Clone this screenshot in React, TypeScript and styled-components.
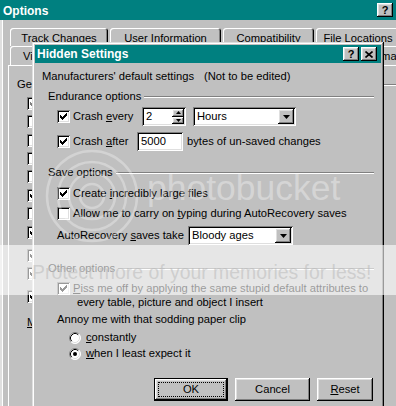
import React from 'react';
import styled, { createGlobalStyle } from 'styled-components';

const GlobalStyle = createGlobalStyle`
  * { box-sizing: border-box; }
  html, body { margin: 0; padding: 0; background: #c0c0c0; }
  body {
    font-family: "Liberation Sans", Arial, sans-serif;
    font-size: 11.2px;
    line-height: 13px;
    color: #000;
  }
`;

const raised = `box-shadow: inset -1px -1px #000, inset 1px 1px #fff, inset -2px -2px #808080, inset 2px 2px #dfdfdf;`;
const sunken = `box-shadow: inset 1px 1px #808080, inset -1px -1px #fff, inset 2px 2px #000, inset -2px -2px #dfdfdf;`;

const Screen = styled.div`
  position: relative;
  width: 396px;
  height: 406px;
  overflow: hidden;
  background: #c0c0c0;
`;

/* ---------- background "Options" window ---------- */
const OptionsWindow = styled.div`
  display: flex;
  flex-direction: column;
  height: 100%;
  box-shadow: inset 2px 0 #dfdfdf, inset 3px 0 #fff;
`;

const TitleBar = styled.div<{ $h: number }>`
  display: flex;
  align-items: center;
  height: ${({ $h }) => $h}px;
  flex: none;
  background: #008080;
  color: #fff;
  font-weight: bold;
  font-size: 12px;
`;

const TitleText = styled.span<{ $pl: number; $pt?: number }>`
  padding-left: ${({ $pl }) => $pl}px;
  padding-top: ${({ $pt }) => $pt ?? 0}px;
  flex: 1;
  white-space: nowrap;
`;

const CapButton = styled.div<{ $mr?: number }>`
  width: 16px;
  height: 14px;
  margin-right: ${({ $mr }) => $mr ?? 0}px;
  flex: none;
  background: #c0c0c0;
  ${raised}
  display: flex;
  align-items: center;
  justify-content: center;
  color: #000;
  font-size: 11px;
  font-weight: bold;
  line-height: 14px;
`;

const TabRow = styled.div<{ $mt: number }>`
  display: flex;
  gap: 2px;
  padding-left: 10px;
  margin-top: ${({ $mt }) => $mt}px;
  flex: none;
`;

const Tab = styled.div<{ $w: number; $h: number }>`
  width: ${({ $w }) => $w}px;
  height: ${({ $h }) => $h}px;
  flex: none;
  border-radius: 3px 3px 0 0;
  box-shadow: inset 1px 1px #fff, inset -1px 0 #000, inset -2px 0 #808080;
  display: flex;
  align-items: center;
  justify-content: center;
  padding-top: 2px;
  white-space: nowrap;
  overflow: hidden;
`;

const TabPanel = styled.div`
  flex: 1;
  margin-left: 8px;
  box-shadow: inset 1px 1px #fff;
  display: flex;
  flex-direction: column;
  padding-left: 9px;
`;

const PanelGroup = styled.div`
  display: flex;
  align-items: center;
  margin-top: 13px;
  &::after {
    content: '';
    flex: 1;
    margin-left: 4px;
    border-top: 1px solid #808080;
    border-bottom: 1px solid #fff;
  }
`;

const PanelItem = styled.div<{ $mt: number }>`
  display: flex;
  align-items: center;
  margin-left: 10px;
  margin-top: ${({ $mt }) => $mt}px;
  white-space: nowrap;
`;

/* ---------- controls ---------- */
const Box = styled.span<{ $dim?: boolean }>`
  width: 13px;
  height: 13px;
  flex: none;
  background: #fff;
  ${sunken}
  display: flex;
  align-items: center;
  justify-content: center;
  color: ${({ $dim }) => ($dim ? '#808080' : '#000')};
`;

const U = styled.span`
  text-decoration: underline;
`;

function Check({ on, dim }: { on?: boolean; dim?: boolean }) {
  return (
    <Box $dim={dim}>
      {on && (
        <svg width="7" height="7" viewBox="0 0 7 7">
          <path
            d="M6 0h1v1h-1zM5 1h2v1h-2zM0 2h1v1h-1zM4 2h3v1h-3zM0 3h2v1h-2zM3 3h3v1h-3zM0 4h5v1h-5zM1 5h3v1h-3zM2 6h1v1h-1z"
            fill="currentColor"
          />
        </svg>
      )}
    </Box>
  );
}

function Radio({ on }: { on?: boolean }) {
  return (
    <svg width="12" height="12" viewBox="0 0 12 12" style={{ flex: 'none' }}>
      <circle cx="6" cy="6" r="5.5" fill="#fff" />
      <path d="M2.11 9.89A5.5 5.5 0 0 1 9.89 2.11" stroke="#808080" fill="none" />
      <path d="M9.89 2.11A5.5 5.5 0 0 1 2.11 9.89" stroke="#fff" fill="none" />
      <path d="M2.82 9.18A4.5 4.5 0 0 1 9.18 2.82" stroke="#000" fill="none" />
      <path d="M9.18 2.82A4.5 4.5 0 0 1 2.82 9.18" stroke="#dfdfdf" fill="none" />
      {on && <circle cx="6" cy="6" r="2" fill="#000" />}
    </svg>
  );
}

const Field = styled.div<{ $w: number }>`
  width: ${({ $w }) => $w}px;
  height: 19px;
  flex: none;
  background: #fff;
  ${sunken}
  display: flex;
  align-items: center;
  padding: 2px;
`;

const FieldText = styled.span`
  flex: 1;
  padding-left: 2px;
  white-space: nowrap;
`;

const SpinCol = styled.div`
  width: 12px;
  align-self: stretch;
  display: flex;
  flex-direction: column;
`;

const SpinBtn = styled.div`
  flex: 1;
  background: #c0c0c0;
  ${raised}
  display: flex;
  align-items: center;
  justify-content: center;
`;

const DropBtn = styled.div`
  width: 16px;
  align-self: stretch;
  background: #c0c0c0;
  ${raised}
  display: flex;
  align-items: center;
  justify-content: center;
`;

function Combo({ w, value }: { w: number; value: string }) {
  return (
    <Field $w={w}>
      <FieldText>{value}</FieldText>
      <DropBtn>
        <svg width="7" height="4" viewBox="0 0 7 4">
          <path d="M0 0h7L3.5 4z" fill="#000" />
        </svg>
      </DropBtn>
    </Field>
  );
}

function Spinner({ w, value }: { w: number; value: string }) {
  return (
    <Field $w={w}>
      <FieldText>{value}</FieldText>
      <SpinCol>
        <SpinBtn>
          <svg width="5" height="3" viewBox="0 0 5 3">
            <path d="M2.5 0L5 3H0z" fill="#000" />
          </svg>
        </SpinBtn>
        <SpinBtn>
          <svg width="5" height="3" viewBox="0 0 5 3">
            <path d="M0 0h5L2.5 3z" fill="#000" />
          </svg>
        </SpinBtn>
      </SpinCol>
    </Field>
  );
}

/* ---------- Hidden Settings dialog ---------- */
const Dialog = styled.div`
  position: absolute;
  left: 32px;
  top: 42px;
  width: 352px;
  height: 372px;
  padding: 3px;
  background: #c0c0c0;
  box-shadow: inset -1px -1px #000, inset 1px 1px #dfdfdf, inset -2px -2px #808080, inset 2px 2px #fff;
  display: flex;
  flex-direction: column;
`;

const TitleButtons = styled.div`
  display: flex;
  gap: 2px;
  margin-right: 4px;
`;

const Body = styled.div`
  display: flex;
  flex-direction: column;
  padding: 0 7px;
`;

const Line = styled.div<{ $mt: number; $indent?: number }>`
  display: flex;
  align-items: center;
  margin-top: ${({ $mt }) => $mt}px;
  margin-left: ${({ $indent }) => $indent ?? 0}px;
  white-space: nowrap;
`;

const Fixed = styled.span<{ $w: number }>`
  width: ${({ $w }) => $w}px;
  flex: none;
  display: flex;
  align-items: center;
  gap: 3px;
`;

const GroupHead = styled.div<{ $mt: number }>`
  display: flex;
  align-items: center;
  margin: ${({ $mt }) => $mt}px 0 0 6px;
  white-space: nowrap;
  &::after {
    content: '';
    flex: 1;
    margin-left: 3px;
    border-top: 1px solid #808080;
    border-bottom: 1px solid #fff;
  }
`;

const CheckRow = styled.div<{ $mt: number; $indent: number }>`
  display: flex;
  align-items: center;
  gap: 3px;
  margin-top: ${({ $mt }) => $mt}px;
  margin-left: ${({ $indent }) => $indent}px;
  white-space: nowrap;
`;

const RadioRow = styled(CheckRow)`
  gap: 5px;
`;

const WrapRow = styled.div<{ $mt: number }>`
  display: flex;
  align-items: flex-start;
  gap: 3px;
  margin: ${({ $mt }) => $mt}px 0 0 15px;
  line-height: 14px;
  white-space: nowrap;
  > span:first-child {
    margin-top: 1px;
  }
`;

const WrapLine = styled.div<{ $pl?: number }>`
  padding-left: ${({ $pl }) => $pl ?? 0}px;
`;

const ButtonRow = styled.div`
  display: flex;
  justify-content: flex-end;
  gap: 7px;
  margin-top: 18px;
  margin-right: 1px;
`;

const PushButton = styled.div<{ $w: number; $default?: boolean }>`
  position: relative;
  width: ${({ $w }) => $w}px;
  height: 23px;
  background: #c0c0c0;
  display: flex;
  align-items: center;
  justify-content: center;
  ${({ $default }) =>
    $default
      ? 'box-shadow: inset 0 0 0 1px #000, inset -2px -2px #000, inset 2px 2px #fff, inset -3px -3px #808080, inset 3px 3px #dfdfdf;'
      : raised}
  ${({ $default }) =>
    $default
      ? `&::after { content: ''; position: absolute; inset: 4px; border: 1px dotted #000; }`
      : ''}
`;

/* ---------- photobucket watermark ---------- */
const Watermark = styled.div`
  position: absolute;
  inset: 0;
  pointer-events: none;
`;

const Logo = styled.svg`
  position: absolute;
  left: 38px;
  top: 140px;
`;

const BucketText = styled.div`
  position: absolute;
  left: 147px;
  top: 168px;
  font-size: 35.5px;
  line-height: 40px;
  color: rgba(255, 255, 255, 0.35);
  white-space: nowrap;
`;

const Band = styled.div`
  position: absolute;
  left: 0;
  right: 0;
  top: 245px;
  height: 50px;
  background: rgba(255, 255, 255, 0.6);
  padding: 16px 0 0 32px;
  font-size: 19.4px;
  line-height: 22px;
  color: rgba(185, 185, 185, 0.55);
  white-space: nowrap;
`;

const leftChecks = [
  { mt: 6, on: true, dim: true },
  { mt: 5 },
  { mt: 6 },
  { mt: 5 },
  { mt: 5 },
  { mt: 6, on: true },
  { mt: 5 },
  { mt: 6, on: true },
  { mt: 10, on: true },
  { mt: 5, on: true },
  { mt: 10, on: true },
];

export default function App() {
  return (
    <Screen>
      <GlobalStyle />
      <OptionsWindow>
        <TitleBar $h={20}>
          <TitleText $pl={3} $pt={2}>Options</TitleText>
          <CapButton $mr={3}>?</CapButton>
        </TitleBar>
        <TabRow $mt={8}>
          <Tab $w={98} $h={18}>Track Changes</Tab>
          <Tab $w={111} $h={18}>User Information</Tab>
          <Tab $w={91} $h={18}>Compatibility</Tab>
          <Tab $w={84} $h={18}>File Locations</Tab>
        </TabRow>
        <TabRow $mt={0}>
          <Tab $w={50} $h={19}>View</Tab>
          <Tab $w={52} $h={19}>General</Tab>
          <Tab $w={44} $h={19}>Edit</Tab>
          <Tab $w={44} $h={19}>Print</Tab>
          <Tab $w={82} $h={19}>Save</Tab>
          <Tab $w={116} $h={19}>Spelling &amp; Grammar</Tab>
        </TabRow>
        <TabPanel>
          <PanelGroup>General</PanelGroup>
          {leftChecks.map((c, i) => (
            <PanelItem key={i} $mt={c.mt}>
              <Check on={c.on} dim={c.dim} />
            </PanelItem>
          ))}
          <PanelItem $mt={13}>
            <U>M</U>
          </PanelItem>
        </TabPanel>
      </OptionsWindow>

      <Dialog>
        <TitleBar $h={18}>
          <TitleText $pl={2}>Hidden Settings</TitleText>
          <TitleButtons>
            <CapButton>?</CapButton>
            <CapButton>
              <svg width="8" height="7" viewBox="0 0 8 7">
                <path d="M0.5 0.5L7.5 6.5M7.5 0.5L0.5 6.5" stroke="#000" strokeWidth="1.6" />
              </svg>
            </CapButton>
          </TitleButtons>
        </TitleBar>
        <Body>
          <Line $mt={7}>
            <Fixed $w={162}>Manufacturers' default settings</Fixed>
            <span>(Not to be edited)</span>
          </Line>

          <GroupHead $mt={7}>Endurance options</GroupHead>
          <Line $mt={4} $indent={15}>
            <Fixed $w={85}>
              <Check on />
              <span>
                Crash <U>e</U>very
              </span>
            </Fixed>
            <Spinner w={44} value="2" />
            <span style={{ width: 7 }} />
            <Combo w={103} value="Hours" />
          </Line>
          <Line $mt={6} $indent={15}>
            <Fixed $w={80}>
              <Check on />
              <span>
                Crash <U>a</U>fter
              </span>
            </Fixed>
            <Field $w={46}>
              <FieldText>5000</FieldText>
            </Field>
            <span style={{ marginLeft: 4 }}>bytes of un-saved changes</span>
          </Line>

          <GroupHead $mt={15}>Save options</GroupHead>
          <CheckRow $mt={8} $indent={15}>
            <Check on />
            <span>
              Create <U>i</U>ncredibly large files
            </span>
          </CheckRow>
          <CheckRow $mt={7} $indent={15}>
            <Check />
            <span>
              Allow me to carry on <U>t</U>yping during AutoRecovery saves
            </span>
          </CheckRow>
          <Line $mt={6} $indent={15}>
            <Fixed $w={131}>
              <span>
                AutoRecovery <U>s</U>aves take
              </span>
            </Fixed>
            <Combo w={105} value="Bloody ages" />
          </Line>

          <GroupHead $mt={17}>Other options</GroupHead>
          <WrapRow $mt={6}>
            <Check on />
            <div>
              <WrapLine>
                <U>P</U>iss me off by applying the same stupid default attributes to
              </WrapLine>
              <WrapLine $pl={4}>every table, picture and object I insert</WrapLine>
            </div>
          </WrapRow>
          <Line $mt={4} $indent={15}>
            Annoy me with that sodding paper clip
          </Line>
          <RadioRow $mt={5} $indent={27}>
            <Radio />
            <span>
              <U>c</U>onstantly
            </span>
          </RadioRow>
          <RadioRow $mt={3} $indent={27}>
            <Radio on />
            <span>
              <U>w</U>hen I least expect it
            </span>
          </RadioRow>

          <ButtonRow>
            <PushButton $w={74} $default>
              OK
            </PushButton>
            <PushButton $w={75}>Cancel</PushButton>
            <PushButton $w={56}>
              <span>
                <U>R</U>eset
              </span>
            </PushButton>
          </ButtonRow>
        </Body>
      </Dialog>

      <Watermark>
        <Logo width="110" height="110" viewBox="0 0 110 110">
          {[12, 23, 34, 45].map((r) => (
            <circle key={r} cx="54" cy="56" r={r} fill="none" stroke="rgba(255,255,255,0.3)" strokeWidth="2.5" />
          ))}
        </Logo>
        <BucketText>photobucket</BucketText>
        <Band>Protect more of your memories for less!</Band>
      </Watermark>
    </Screen>
  );
}
